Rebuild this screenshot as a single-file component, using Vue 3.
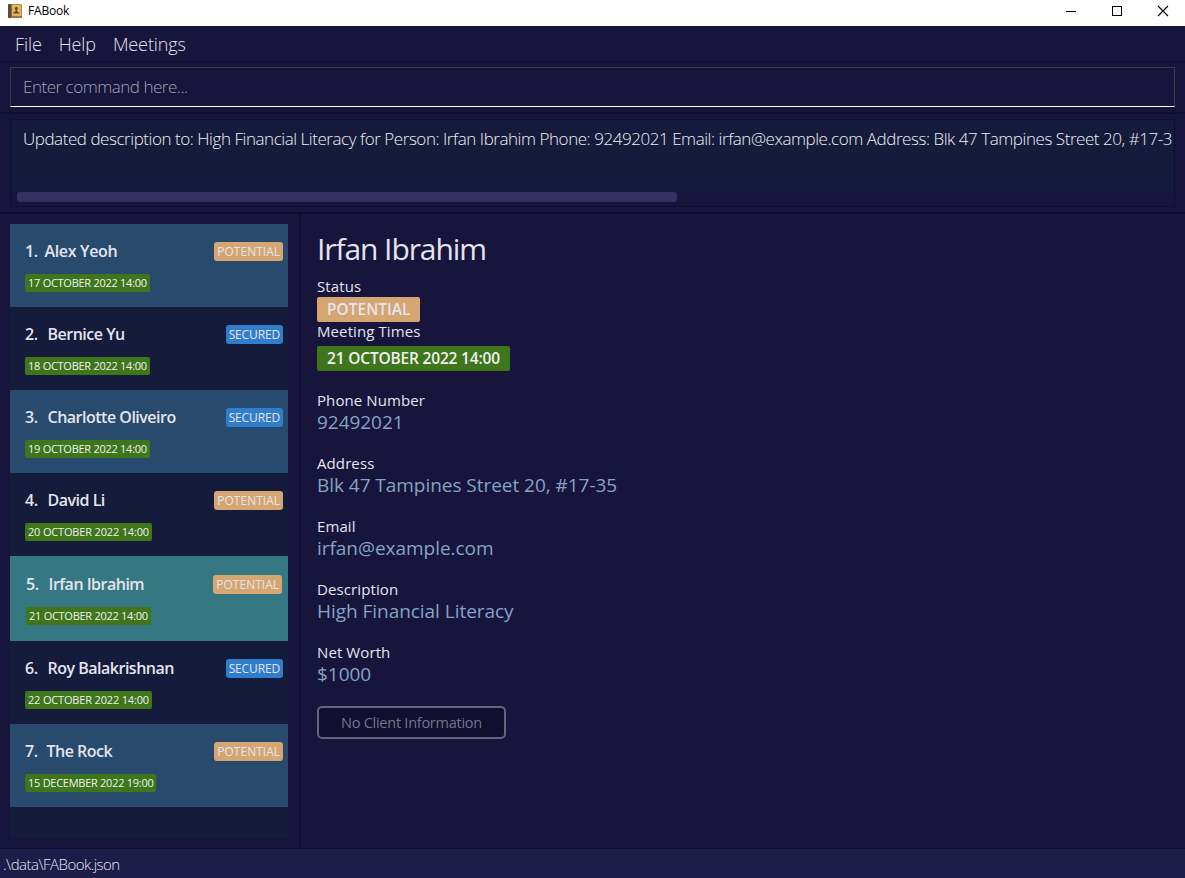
<script setup>
const menus = ['File', 'Help', 'Meetings']

const message =
  'Updated description to: High Financial Literacy for Person: Irfan Ibrahim Phone: 92492021 Email: irfan@example.com Address: Blk 47 Tampines Street 20, #17-3'

const clients = [
  { id: 1, name: 'Alex Yeoh', status: 'POTENTIAL', meeting: '17 OCTOBER 2022 14:00' },
  { id: 2, name: 'Bernice Yu', status: 'SECURED', meeting: '18 OCTOBER 2022 14:00' },
  { id: 3, name: 'Charlotte Oliveiro', status: 'SECURED', meeting: '19 OCTOBER 2022 14:00' },
  { id: 4, name: 'David Li', status: 'POTENTIAL', meeting: '20 OCTOBER 2022 14:00' },
  { id: 5, name: 'Irfan Ibrahim', status: 'POTENTIAL', meeting: '21 OCTOBER 2022 14:00', selected: true },
  { id: 6, name: 'Roy Balakrishnan', status: 'SECURED', meeting: '22 OCTOBER 2022 14:00' },
  { id: 7, name: 'The Rock', status: 'POTENTIAL', meeting: '15 DECEMBER 2022 19:00' },
]

const fields = [
  { label: 'Phone Number', value: '92492021' },
  { label: 'Address', value: 'Blk 47 Tampines Street 20, #17-35' },
  { label: 'Email', value: 'irfan@example.com' },
  { label: 'Description', value: 'High Financial Literacy' },
  { label: 'Net Worth', value: '$1000' },
]
</script>

<template>
  <div class="window">
    <header class="titlebar">
      <svg class="app-icon" width="14" height="14" viewBox="0 0 14 14">
        <rect width="14" height="14" rx="1" fill="#b98a3c" />
        <rect x="4" y="1" width="9" height="11" fill="#dfb45e" />
        <rect width="3.2" height="14" rx="0.8" fill="#5e4c3b" />
        <rect x="3.2" width="0.8" height="14" fill="#8d6a35" />
        <rect x="4" y="12.3" width="10" height="1.7" fill="#9a7135" />
        <circle cx="8.3" cy="4.5" r="1.4" fill="#5d4728" />
        <path d="M7.600 5h1.400v2.400l2.200 1v1.200H5.400V8.400l2.200-1z" fill="#5d4728" />
      </svg>
      <span class="app-name">FABook</span>
      <div class="controls">
        <svg width="12" height="12" viewBox="0 0 12 12"><path d="M1 6.500h10" stroke="#000" /></svg>
        <svg width="12" height="12" viewBox="0 0 12 12"><rect x="1.500" y="1.500" width="9" height="9" fill="none" stroke="#000" /></svg>
        <svg width="12" height="12" viewBox="0 0 12 12"><path d="M1 1l10 10M11 1L1 11" stroke="#000" stroke-width="1.1" /></svg>
      </div>
    </header>

    <nav class="menubar">
      <span v-for="m in menus" :key="m">{{ m }}</span>
    </nav>

    <section class="command">
      <div class="command-field">Enter command here...</div>
    </section>

    <section class="result">
      <div class="result-box">
        <div class="result-text">{{ message }}</div>
        <div class="track"><div class="thumb"></div></div>
      </div>
    </section>

    <main class="main">
      <aside class="sidebar">
        <ul class="list">
          <li v-for="c in clients" :key="c.id" class="card" :class="{ selected: c.selected }">
            <div class="card-head">
              <span class="num">{{ c.id }}.</span>
              <span class="name">{{ c.name }}</span>
              <span class="chip" :class="c.status.toLowerCase()">{{ c.status }}</span>
            </div>
            <span class="date">{{ c.meeting }}</span>
          </li>
        </ul>
      </aside>

      <article class="detail">
        <h1>Irfan Ibrahim</h1>
        <div class="label">Status</div>
        <div class="badge potential">POTENTIAL</div>
        <div class="label times">Meeting Times</div>
        <div class="badge meeting">21 OCTOBER 2022 14:00</div>
        <div v-for="f in fields" :key="f.label" class="field">
          <div class="label">{{ f.label }}</div>
          <div class="value">{{ f.value }}</div>
        </div>
        <button class="info" disabled>No Client Information</button>
      </article>
    </main>

    <footer class="statusbar">.\data\FABook.json</footer>
  </div>
</template>

<style>
body {
  background: #17153b;
}
</style>

<style scoped>
.window {
  display: flex;
  flex-direction: column;
  width: 1185px;
  height: 878px;
  overflow: hidden;
  box-sizing: border-box;
  background: #17153b;
  color: #e4e4ee;
  font-family: 'Open Sans', 'Noto Sans', sans-serif;
  white-space: nowrap;
}
.window > * {
  flex-shrink: 0;
}
.window * {
  box-sizing: border-box;
}
.titlebar {
  display: flex;
  align-items: center;
  height: 26px;
  padding: 0 16px 5px 8px;
  background: #fff;
  color: #000;
}
.app-name {
  margin-left: 6px;
  padding-top: 1px;
  font-size: 12px;
  line-height: 20px;
  letter-spacing: -0.2px;
}
.controls {
  display: flex;
  gap: 34px;
  margin-left: auto;
}
.menubar {
  display: flex;
  gap: 17px;
  height: 36px;
  padding-left: 15px;
  border-bottom: 1px solid #100e30;
  font-size: 18px;
  font-weight: 300;
  line-height: 36px;
  letter-spacing: -0.1px;
}
.command {
  height: 52px;
  padding: 5px 10px 0;
  border-bottom: 2px solid #110f31;
}
.command-field {
  height: 40px;
  padding-left: 12px;
  border: 1px solid #3c3b45;
  border-bottom: 1px solid #fff;
  color: #a3a2b0;
  font-size: 17px;
  font-weight: 300;
  line-height: 38px;
  letter-spacing: -0.48px;
}
.result {
  height: 100px;
  padding: 5px 10px 0;
  border-bottom: 2px solid #0f0d2f;
}
.result-box {
  height: 88px;
  border: 1px solid #100f30;
  padding: 0 1px;
}
.result-text {
  height: 71px;
  padding: 6px 0 0 11px;
  overflow: hidden;
  background: #151b3b;
  color: #eef0f4;
  font-size: 17px;
  font-weight: 300;
  line-height: 26px;
  letter-spacing: -0.45px;
}
.track {
  padding: 1px 0 0 5px;
}
.thumb {
  width: 660px;
  height: 10px;
  border-radius: 3px;
  background: #353163;
}
.main {
  display: flex;
  height: 634px;
}
.sidebar {
  width: 301px;
  padding: 10px 11px 10px 10px;
  border-right: 2px solid #100e30;
}
.list {
  width: 278px;
  height: 614px;
  margin: 0;
  padding: 0;
  list-style: none;
  background: #151b3b;
}
.card {
  height: 83px;
  padding: 17px 5px 0 15px;
}
.card:nth-child(odd) {
  background: #284a6d;
}
.card.selected {
  height: 85px;
  padding: 18px 6px 0 16px;
  background: #357882;
}
.card-head {
  display: flex;
  align-items: center;
  height: 21px;
  font-size: 16px;
  font-weight: 600;
  line-height: 21px;
  letter-spacing: -0.5px;
}
.name {
  margin-left: 10px;
}
.card:first-child .name {
  margin-left: 7px;
  letter-spacing: -0.35px;
}
.card:last-child .name {
  margin-left: 9px;
}
.chip {
  height: 19px;
  margin-left: auto;
  padding: 0 3px;
  border-radius: 3px;
  font-size: 12px;
  font-weight: 400;
  line-height: 19px;
  letter-spacing: 0;
}
.potential {
  background: #d5a671;
}
.secured {
  background: #307dcd;
}
.chip.secured {
  letter-spacing: -0.14px;
}
.date {
  display: block;
  width: fit-content;
  height: 18px;
  margin-top: 12px;
  padding: 0 3px;
  border-radius: 2px;
  background: #3e751d;
  color: #f0f3ee;
  font-size: 11px;
  line-height: 18px;
  letter-spacing: -0.27px;
}
.card:nth-child(4) .date,
.card:nth-child(6) .date {
  letter-spacing: -0.17px;
}
.detail {
  flex: 1;
  padding: 14px 0 0 16px;
}
h1 {
  height: 48px;
  margin: 0;
  font-size: 30px;
  font-weight: 400;
  line-height: 41px;
  letter-spacing: -1.08px;
}
.label {
  height: 21px;
  font-size: 15px;
  line-height: 21px;
  letter-spacing: 0.1px;
}
.times {
  height: 24px;
  line-height: 19px;
}
.badge {
  width: fit-content;
  height: 25px;
  padding: 0 10px;
  border-radius: 2px;
  font-size: 15.5px;
  font-weight: 600;
  line-height: 25px;
}
.badge.meeting {
  margin-bottom: 19px;
  background: #3e751d;
  color: #f0f3ee;
  letter-spacing: -0.18px;
}
.field {
  height: 63px;
}
.value {
  color: #84a3c6;
  font-size: 19px;
  line-height: 22px;
  letter-spacing: -0.04px;
}
.info {
  display: block;
  width: 189px;
  height: 33px;
  margin-top: 1px;
  padding: 0;
  border: 2px solid #66647c;
  border-radius: 5px;
  background: #110f30;
  color: #75748a;
  font-family: inherit;
  font-size: 14.5px;
  line-height: 29px;
  letter-spacing: -0.25px;
}
.statusbar {
  height: 30px;
  padding-left: 3px;
  border-top: 1px solid #100e30;
  background: #1d1d49;
  font-size: 15px;
  font-weight: 300;
  line-height: 31px;
  letter-spacing: -0.52px;
}
</style>
